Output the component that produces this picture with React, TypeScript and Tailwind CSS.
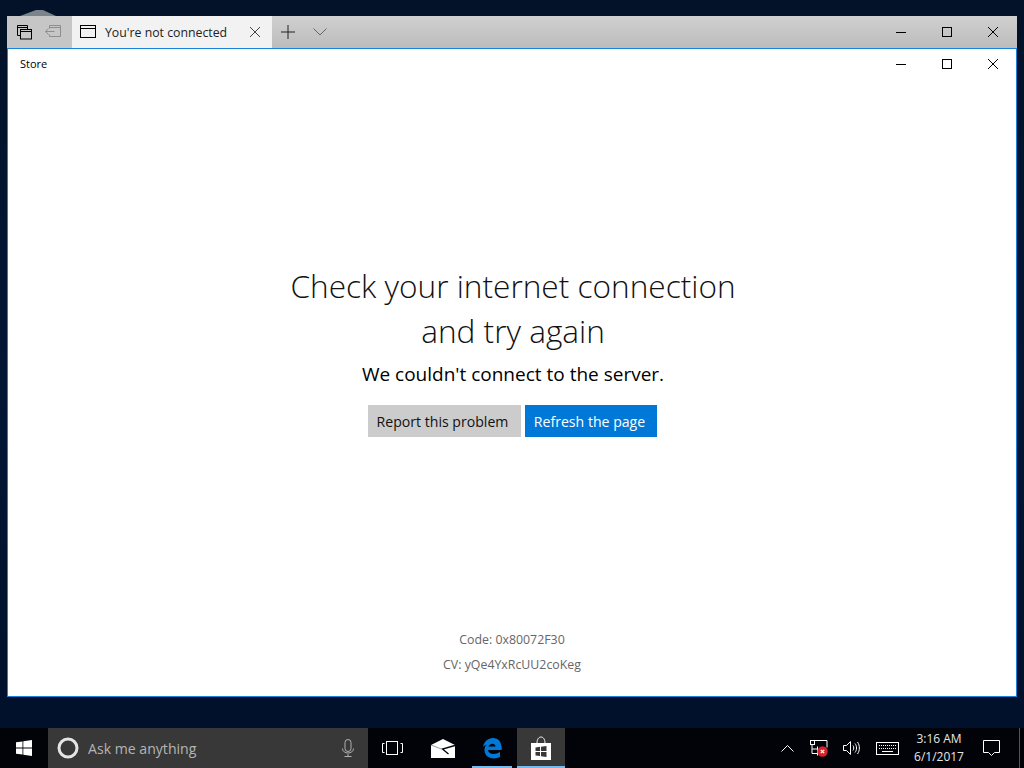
import type { ReactNode } from 'react';

const FONT = "font-['Open_Sans','Noto_Sans',sans-serif]";

function Minimize() {
  return (
    <svg width="12" height="12" viewBox="0 0 12 12" stroke="#000" fill="none">
      <path d="M1 6.5h10" />
    </svg>
  );
}

function Maximize() {
  return (
    <svg width="12" height="12" viewBox="0 0 12 12" stroke="#000" fill="none">
      <rect x="1.5" y="1.5" width="9" height="9" />
    </svg>
  );
}

function Close({ color = '#000' }: { color?: string }) {
  return (
    <svg width="12" height="12" viewBox="0 0 12 12" stroke={color} fill="none">
      <path d="M1 1l10 10M11 1L1 11" />
    </svg>
  );
}

function WindowControls({ className = '' }: { className?: string }) {
  return (
    <div className={`flex items-center ${className}`}>
      <div className="w-[46px] flex justify-center"><Minimize /></div>
      <div className="w-[46px] flex justify-center"><Maximize /></div>
      <div className="w-[46px] flex justify-center"><Close /></div>
    </div>
  );
}

function TitleBar() {
  return (
    <div className="h-[32px] flex items-stretch justify-between bg-gradient-to-b from-[#d0d0d0] to-[#bcbcbc]">
      <div className="flex items-stretch">
        <div className="w-[65px] flex items-center bg-[#c6c6c6]">
          <svg className="ml-[10px]" width="15" height="15" viewBox="0 0 15 15" fill="none" stroke="#000">
            <path d="M3.500 10.500h-3v-10h10v3.500" />
            <path d="M0.500 2.500h10" />
            <rect x="3.500" y="4.500" width="11" height="9.500" fill="#c6c6c6" />
            <path d="M3.500 6.500h11" />
          </svg>
          <svg className="ml-[13px]" width="16" height="14" viewBox="0 0 16 14" fill="none" stroke="#8e8e8e">
            <path d="M4.500 3.500V0.500h11v11h-11V9.500" />
            <path d="M4.500 2.500h11" />
            <path d="M0.500 6.500h9M3.500 3.500l-3 3 3 3" />
          </svg>
        </div>
        <div className="w-[200px] flex items-center bg-[#f2f2f2]">
          <svg className="ml-[8px]" width="16" height="14" viewBox="0 0 16 14" fill="none" stroke="#000">
            <rect x="0.5" y="0.5" width="15" height="12" />
            <path d="M0.5 3.500h15" />
          </svg>
          <span className={`ml-[9px] pt-[2px] text-[12.3px] text-[#222] whitespace-nowrap ${FONT}`}>You're not connected</span>
          <div className="ml-auto mr-[11px]"><Close color="#444" /></div>
        </div>
        <div className="w-[32px] flex items-center justify-center">
          <svg width="14" height="14" viewBox="0 0 14 14" stroke="#222" fill="none">
            <path d="M7 0v14M0 7h14" />
          </svg>
        </div>
        <div className="w-[32px] flex items-center justify-center">
          <svg width="14" height="8" viewBox="0 0 14 8" stroke="#666" fill="none">
            <path d="M0.5 0.5L7 7l6.5-6.5" />
          </svg>
        </div>
      </div>
      <WindowControls className="mr-[1px]" />
    </div>
  );
}

function AppWindow() {
  return (
    <div className="flex-1 flex flex-col bg-white border border-[#1883d7] text-black">
      <div className="h-[29px] flex items-center justify-between shrink-0">
        <span className={`ml-[12px] pt-[1px] text-[11px] ${FONT}`}>Store</span>
        <WindowControls />
      </div>
      <div className={`flex-1 flex flex-col items-center ${FONT}`}>
        <h1 className="mt-[185px] ml-[2px] text-[31.6px] leading-[45px] font-light text-center text-[#111]">
          Check your internet connection
          <br />
          and try again
        </h1>
        <p className="mt-[8px] ml-[2px] text-[19px] leading-[26px]">We couldn't connect to the server.</p>
        <div className="mt-[18px] flex gap-[4px] text-[14.1px]">
          <button className="h-[32px] w-[153px] bg-[#cccccc] text-[#111] pr-[3px] pt-[2px]">Report this problem</button>
          <button className="h-[32px] w-[132px] bg-[#0078d7] text-white pr-[2px] pt-[2px]">Refresh the page</button>
        </div>
        <div className="mt-auto mb-[22px] flex flex-col items-center gap-[7px] text-[12.35px] leading-[18px] text-[#666]">
          <span>Code: 0x80072F30</span>
          <span>CV: yQe4YxRcUU2coKeg</span>
        </div>
      </div>
    </div>
  );
}

function TaskIcon({ children, active, running, width }: { children: ReactNode; active?: boolean; running?: boolean; width: string }) {
  return (
    <div className={`relative h-full flex items-center justify-center ${width} ${active ? 'bg-[#383838]' : ''}`}>
      {children}
      {running && <div className="absolute bottom-0 left-0 right-0 h-[2px] bg-[#76b9ed]" />}
    </div>
  );
}

function Taskbar() {
  return (
    <div className={`h-[40px] shrink-0 flex items-stretch bg-[#020308] text-white ${FONT}`}>
      <div className="w-[48px] flex items-center justify-center">
        <svg width="16" height="16" viewBox="0 0 16 16" fill="#fff">
          <path d="M0 2.3l6.5-.9v6.2H0zM7.3 1.3L16 0v7.6H7.3zM0 8.4h6.5v6.2L0 13.7zM7.3 8.4H16V16l-8.7-1.3z" />
        </svg>
      </div>
      <div className="w-[320px] flex items-center bg-[#383838]">
        <svg className="ml-[9px]" width="22" height="22" viewBox="0 0 22 22" fill="none" stroke="#e4e4e4" strokeWidth="3">
          <circle cx="11" cy="11" r="9" />
        </svg>
        <span className="ml-[9px] pt-[1px] text-[14.1px] text-[#b4b4b4]">Ask me anything</span>
        <svg className="ml-auto mr-[14px]" width="12" height="18" viewBox="0 0 12 18" fill="none" stroke="#b0b0b0">
          <rect x="3" y="0.5" width="6" height="12" rx="3" />
          <path d="M0.5 9.5c0 6 11 6 11 0M6 15v2.5M2.5 17.5h7" />
        </svg>
      </div>
      <TaskIcon width="w-[48px]">
        <svg width="21" height="14" viewBox="0 0 21 14" fill="none" stroke="#fff">
          <rect x="4.5" y="0.5" width="11" height="13" strokeWidth="1" />
          <path d="M2.5 2.5h-2v9h2M18.5 2.5h2v9h-2" />
        </svg>
      </TaskIcon>
      <TaskIcon width="w-[54px]">
        <svg width="24" height="19" viewBox="0 0 24 19">
          <path d="M0 6L12 0l12 6v13H0z" fill="#fff" />
          <path d="M24 6.500L11.500 10l6 5" fill="none" stroke="#020308" strokeWidth="1.300" />
          <path d="M0 6l10.500 4" fill="none" stroke="#020308" strokeWidth="0.400" />
        </svg>
      </TaskIcon>
      <div className="w-[2px]" />
      <TaskIcon width="w-[40px]" running>
        <svg width="20" height="21" viewBox="0 0 20 21" fill="#0078d7">
          <path d="M1 9C2 3.5 6 0 11 0c5.500 0 9 4 8.700 12H6c.5 4.500 7 5 12 2v5c-6 3-15 1.500-15.500-6.500C2.300 10 3 8 5 6.500 3.500 7 2 8 1 9zm5.500-.5h7C13.500 5 8 4.500 6.500 8.500z" />
        </svg>
      </TaskIcon>
      <div className="w-[5px]" />
      <TaskIcon width="w-[48px]" active running>
        <svg width="22" height="24" viewBox="0 0 22 24" fill="#fff">
          <path fillRule="evenodd" d="M1 7h20v17H1zM5.500 11.500v3.500H10v-4.200zM11 10.700V15h5.500v-5zM5.500 16v3.500l4.500.6V16zM11 16v4.200l5.500.8V16z" />
          <path d="M7 7c0-8 8-8 8 0" fill="none" stroke="#fff" />
        </svg>
      </TaskIcon>
      <div className="ml-auto flex items-center">
        <svg className="mr-[16px]" width="13" height="8" viewBox="0 0 13 8" fill="none" stroke="#fff">
          <path d="M0.5 7.500L6.500 1.500l6 6" />
        </svg>
        <svg className="mr-[15px]" width="18" height="17" viewBox="0 0 18 17" fill="none" stroke="#fff">
          <rect x="0.5" y="0.500" width="4" height="4" />
          <path d="M4.500 0.500h12.500v7M2 4.500v9h6M2 9h5M7.500 6.500v9" />
          <circle cx="12.500" cy="11.500" r="5.200" fill="#d8232a" stroke="none" />
          <path d="M10.800 9.800l3.400 3.400M14.200 9.800l-3.400 3.400" stroke="#fff" strokeWidth="1.200" />
        </svg>
        <svg className="mr-[16px]" width="17" height="14" viewBox="0 0 17 14" fill="none" stroke="#fff">
          <path d="M0.500 4.500h3l4-4v13l-4-4h-3zM10 4.500c1 1.500 1 3.500 0 5M12 2.500c2 2.500 2 6.500 0 9M14.500 1c2.500 3.500 2.500 8.500 0 12" />
        </svg>
        <svg className="mr-[5px]" width="23" height="13" viewBox="0 0 23 13" fill="none" stroke="#fff">
          <rect x="0.500" y="0.500" width="22" height="12" />
          <path d="M3 3.500h17M3 6.500h17" strokeDasharray="1 1" />
          <path d="M6 9.500h11" />
        </svg>
        <div className="w-[70px] flex flex-col items-center text-[12px] leading-[18px] text-[#e6e6e6]">
          <span>3:16 AM</span>
          <span>6/1/2017</span>
        </div>
        <svg className="ml-[9px]" width="17" height="16" viewBox="0 0 17 16" fill="none" stroke="#fff">
          <path d="M0.500 0.500h16v12h-5l-3 3-3-3h-5z" />
        </svg>
        <div className="ml-[19px] mr-[4px] w-[1px] h-full bg-[#555]" />
      </div>
    </div>
  );
}

export default function App() {
  return (
    <div className="relative w-[1024px] h-[768px] overflow-hidden flex flex-col bg-gradient-to-b from-[#031228] via-[#021636] to-[#011029]">
      {/* peak of the wallpaper shape showing above the window */}
      <svg className="absolute left-[18px] top-[8px]" width="40" height="9" viewBox="0 0 40 9" fill="#7b838d">
        <path d="M2 8L18 2h7l13 6v1H2z" />
      </svg>
      <div className="relative flex-1 pt-[16px] pb-[31px] pl-[7px] pr-[7px] flex flex-col">
        <div className="flex-1 flex flex-col">
          <TitleBar />
          <AppWindow />
        </div>
      </div>
      <Taskbar />
    </div>
  );
}
